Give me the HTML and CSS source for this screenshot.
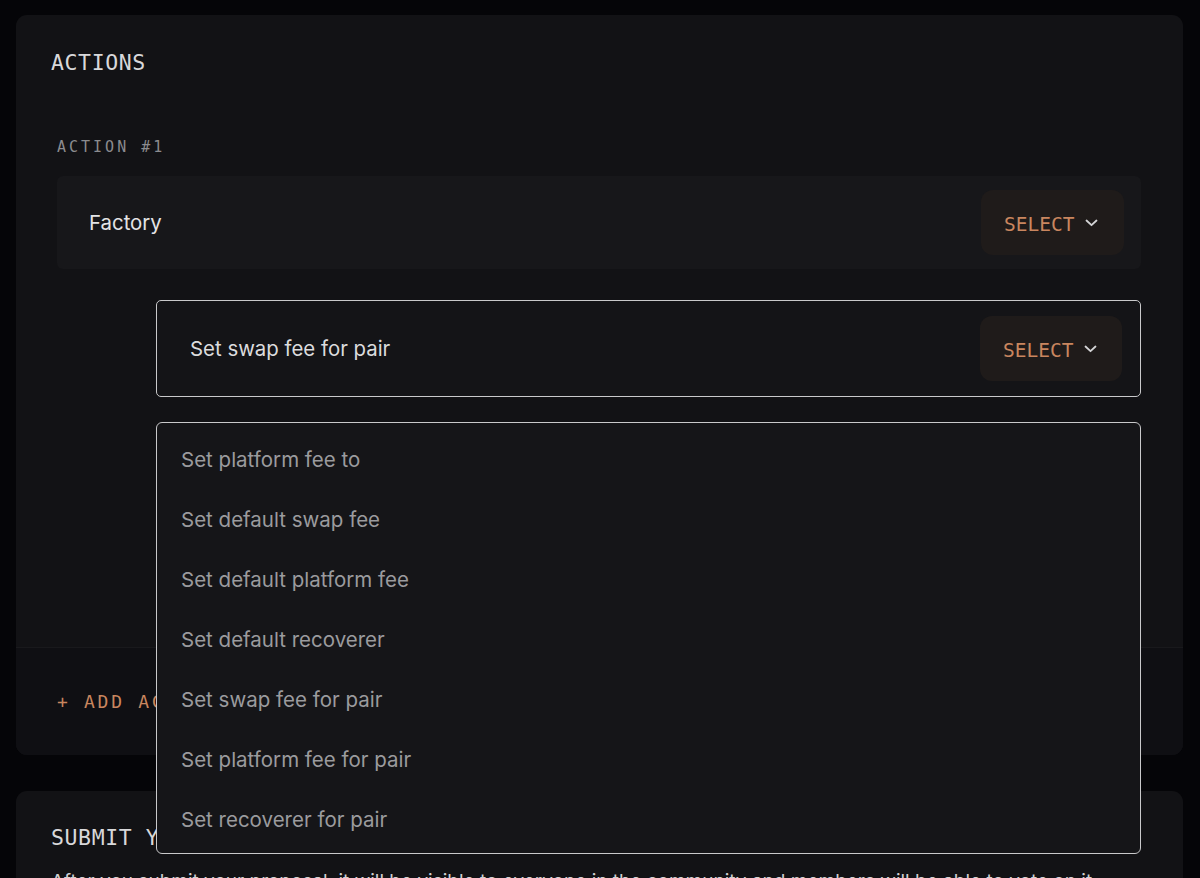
FILE: index.html
```html
<!DOCTYPE html>
<html lang="en">
<head>
<meta charset="utf-8">
<title>Actions</title>
<link rel="stylesheet" href="styles.css">
</head>
<body>
<main class="page">
  <section class="card">
    <div class="card-body">
      <h2 class="card-title">ACTIONS</h2>
      <div class="action">
        <div class="action-label">ACTION #1</div>
        <div class="field field-target">
          <span class="field-text">Factory</span>
          <button class="select-btn" type="button">SELECT
            <svg class="chev" width="13" height="8" viewBox="0 0 13 8"><path d="M1.5 1.5 L6.5 6.2 L11.5 1.5" fill="none" stroke="currentColor" stroke-width="1.8" stroke-linecap="round" stroke-linejoin="round"/></svg>
          </button>
        </div>
        <div class="method-wrap">
          <div class="field field-method">
            <span class="field-text">Set swap fee for pair</span>
            <button class="select-btn" type="button">SELECT
              <svg class="chev" width="13" height="8" viewBox="0 0 13 8"><path d="M1.5 1.5 L6.5 6.2 L11.5 1.5" fill="none" stroke="currentColor" stroke-width="1.8" stroke-linecap="round" stroke-linejoin="round"/></svg>
            </button>
          </div>
          <ul class="menu">
            <li>Set platform fee to</li>
            <li>Set default swap fee</li>
            <li>Set default platform fee</li>
            <li>Set default recoverer</li>
            <li>Set swap fee for pair</li>
            <li>Set platform fee for pair</li>
            <li>Set recoverer for pair</li>
          </ul>
        </div>
      </div>
    </div>
    <div class="card-footer">
      <button class="add-btn" type="button">+ ADD ACTION</button>
    </div>
  </section>
  <section class="card card-submit">
    <h2 class="card-title">SUBMIT YOUR PROPOSAL</h2>
    <p class="submit-text">After you submit your proposal, it will be visible to everyone in the community and members will be able to vote on it.</p>
  </section>
</main>
</body>
</html>
```
FILE: styles.css
```css
* { box-sizing: border-box; }
html, body { margin: 0; padding: 0; }
body {
  background: #050508;
  font-family: "Inter", "Noto Sans", sans-serif;
  color: #e2e2e4;
  overflow: hidden;
  height: 878px;
}
.page {
  padding: 15px 17px 0 16px;
  display: flex;
  flex-direction: column;
  gap: 36px;
}
.card {
  background: #121215;
  border-radius: 11px;
}
.card-body {
  padding: 36px 42px 0 35px;
  height: 632px;
}
.card-title {
  margin: 0;
  font-family: "DejaVu Sans Mono", "Liberation Mono", monospace;
  font-weight: normal;
  font-size: 21.5px;
  line-height: 24px;
  color: #d8d8da;
  letter-spacing: 0.6px;
}
.action {
  margin-left: 6px;
  margin-top: 63px;
}
.action-label {
  font-family: "DejaVu Sans Mono", "Liberation Mono", monospace;
  font-size: 15px;
  line-height: 18px;
  letter-spacing: 3px;
  color: #8b8b8e;
}
.field {
  display: flex;
  align-items: center;
  justify-content: space-between;
  border-radius: 6px;
}
.field-target {
  margin-top: 20px;
  height: 93px;
  background: #17171a;
  padding: 0 17px 0 32px;
}
.field-text {
  font-size: 20.4px;
  color: #e4e4e6;
}
.method-wrap {
  position: relative;
  margin-left: 99px;
  margin-top: 31px;
}
.field-method {
  height: 97px;
  border: 1px solid #c9c9cb;
  background: #141417;
  border-radius: 5px;
  padding: 0 18px 0 33px;
}
.field-method .field-text { color: #dcdcde; }
.select-btn {
  display: flex;
  align-items: center;
  gap: 11px;
  width: 143px;
  height: 65px;
  padding: 3px 0 0 23px;
  border: 0;
  border-radius: 12px;
  background: #1f1b1a;
  color: #c9865f;
  font-family: "DejaVu Sans Mono", "Liberation Mono", monospace;
  font-size: 19.5px;
  letter-spacing: 0;
  cursor: pointer;
}
.field-method .select-btn { width: 142px; }
.chev { color: #d4d4d6; flex: none; margin-top: -2px; }
.menu {
  position: absolute;
  left: 0;
  right: 0;
  top: 122px;
  margin: 0;
  padding: 6px 0 4px 24px;
  list-style: none;
  background: #151518;
  border: 1px solid #c9c9cb;
  border-radius: 6px;
  z-index: 5;
}
.menu li {
  height: 60px;
  display: flex;
  align-items: center;
  font-size: 20.5px;
  color: #9b9b9e;
}
.card-footer {
  height: 108px;
  background: #0f0f13;
  border-top: 1px solid #19191c;
  border-radius: 0 0 11px 11px;
  display: flex;
  align-items: center;
  padding-left: 41px;
}
.add-btn {
  background: none;
  border: 0;
  padding: 0;
  font-family: "DejaVu Sans Mono", "Liberation Mono", monospace;
  font-size: 18px;
  letter-spacing: 2.7px;
  color: #c9865f;
}
.card-submit {
  padding: 35px 42px 40px 35px;
}
.submit-text {
  margin: 18px 0 0;
  font-size: 19px;
  line-height: 28px;
  color: #d0d0d2;
}
```
